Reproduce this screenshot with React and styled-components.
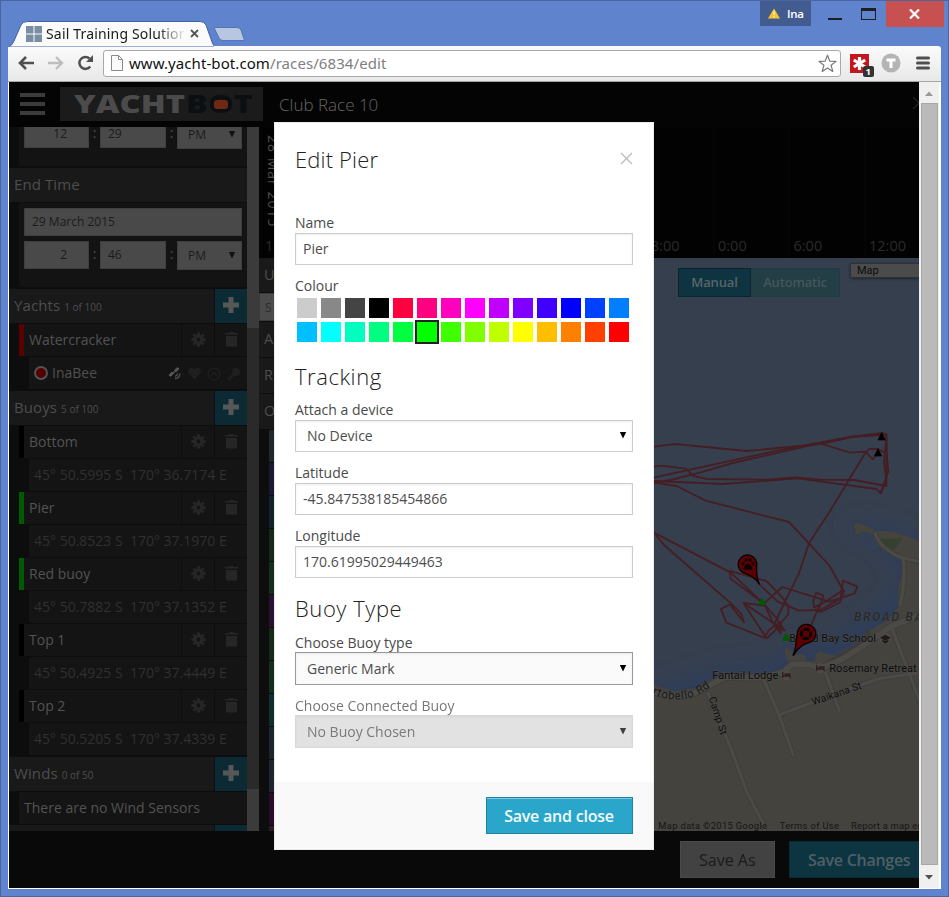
import React from "react";
import styled, { createGlobalStyle } from "styled-components";
import { FaHeart } from "react-icons/fa";

const GlobalStyle = createGlobalStyle`
  * { box-sizing: border-box; }
  html, body { margin: 0; padding: 0; overflow: hidden; }
  body { font-family: "Open Sans", "Noto Sans", sans-serif; }
  svg { display: block; flex: none; }
`;

/* ---------- browser window ---------- */

const BrowserWindow = styled.div`
  position: relative;
  width: 949px;
  height: 897px;
  background: #5f83cc;
  border: 1px solid #4a659f;
  display: flex;
  flex-direction: column;
  padding: 0 7px 7px 7px;
`;

const TitleBar = styled.div`
  height: 45px;
  flex: none;
  display: flex;
  justify-content: space-between;
`;

const TabStrip = styled.div`
  padding-top: 20px;
  display: flex;
`;

const Tab = styled.div`
  position: relative;
  width: 206px;
  height: 25px;
  display: flex;
  align-items: center;
  padding-left: 18px;
`;

const TabShape = styled.svg`
  position: absolute;
  left: 0;
  top: 0;
`;

const TabIcon = styled.svg`
  position: relative;
`;

const TabTitle = styled.span`
  position: relative;
  margin-left: 4px;
  width: 138px;
  overflow: hidden;
  white-space: nowrap;
  font: 14px/20px "Noto Sans", sans-serif;
  letter-spacing: 0.17px;
  color: #1a1a1a;
  mask-image: linear-gradient(to right, #000 112px, transparent 140px);
`;

const TabClose = styled.svg`
  position: relative;
  margin-left: 6px;
`;

const NewTab = styled.svg`
  margin: 5px 0 0 -2px;
`;

const WindowButtons = styled.div`
  display: flex;
  align-items: flex-start;
  color: #fff;
`;

const UserBadge = styled.div`
  width: 51px;
  height: 25px;
  margin-right: 15px;
  padding-left: 8px;
  background: #425c90;
  display: flex;
  align-items: center;
  gap: 7px;
  font: 600 11.5px "Open Sans", sans-serif;
  letter-spacing: -0.3px;
`;

const Minimise = styled.div`
  width: 14px;
  height: 2px;
  margin: 17px 19px 0 2px;
  background: #1d1f24;
`;

const Maximise = styled.div`
  width: 15px;
  height: 12px;
  margin: 7px 10px 0 0;
  border: 1px solid #1d1f24;
  border-top-width: 3px;
`;

const CloseWindow = styled.div`
  width: 58px;
  height: 26px;
  margin-right: -3px;
  padding-right: 2px;
  background: #c75050;
  display: flex;
  align-items: center;
  justify-content: center;
`;

const Toolbar = styled.div`
  height: 36px;
  flex: none;
  padding: 0 10px 1px 10px;
  display: flex;
  align-items: center;
  background: linear-gradient(#fbfbfb, #e8e8e8);
  border-bottom: 1px solid #a5a5a5;
  border-radius: 0 3px 0 0;
`;

const AddressBar = styled.div`
  width: 738px;
  height: 27px;
  margin-left: 9px;
  padding: 0 3px 0 7px;
  display: flex;
  align-items: center;
  background: #fff;
  border: 1px solid #a9a9a9;
  border-radius: 3px;
`;

const Url = styled.span`
  flex: 1;
  margin-left: 6px;
  font: 15px/22px "Noto Sans", sans-serif;
  color: #808080;
  letter-spacing: 0.08px;
  b { font-weight: 400; color: #111; }
`;

const NavIcon = styled.svg`
  margin-right: ${(p) => p.$gap}px;
`;

const ExtensionIcon = styled.svg`
  margin-left: ${(p) => p.$gap}px;
`;

const Viewport = styled.div`
  flex: 1;
  min-height: 0;
  display: flex;
  background: #fff;
  padding: 0 2px 1px 1px;
`;

const Page = styled.div`
  position: relative;
  width: 910px;
  height: 806px;
  flex: none;
  overflow: hidden;
  background: #090909;
  display: flex;
  flex-direction: column;
  color: #4d4d4d;
`;

const PageScroll = styled.div`
  width: 20px;
  height: 806px;
  background: #f0f0f0;
  display: flex;
  flex-direction: column;
  align-items: center;
  padding: 9px 0 8px;
`;

const PageThumb = styled.div`
  width: 17px;
  height: 763px;
  margin: 7px 0 10px;
  background: #bababa;
  border: 1px solid #a8a8a8;
`;

/* ---------- page ---------- */

const Header = styled.header`
  height: 45px;
  flex: none;
  padding: 5px 0 0 11px;
  display: flex;
  background: #040404;
`;

const Burger = styled.div`
  width: 25px;
  margin-top: 6px;
  display: flex;
  flex-direction: column;
  gap: 5px;
  i { height: 4px; background: #3c3c3c; }
`;

const Logo = styled.svg`
  margin-left: 15px;
  background: #1b1b1b;
`;

const RaceName = styled.div`
  flex: 1;
  margin-left: 16px;
  line-height: 35px;
  font-size: 17px;
  font-weight: 300;
  color: #666;
`;

const Chevron = styled.svg`
  margin-top: 9px;
`;

const Columns = styled.div`
  height: 704px;
  flex: none;
  display: flex;
`;

const Sidebar = styled.aside`
  width: 238px;
  height: 704px;
  overflow: hidden;
  background: #0d0d0d;
`;

const SideScroll = styled.div`
  width: 12px;
  background: linear-gradient(#3b3b3b 201px, #2a2a2a 201px 662px, #3b3b3b 662px);
`;

const TimeGroup = styled.div`
  height: ${(p) => p.$height}px;
  margin: 0 0 2px 10px;
  padding: ${(p) => p.$top}px 5px 0;
  overflow: hidden;
  background: #131313;
`;

const TimeRow = styled.div`
  display: flex;
  justify-content: space-between;
  margin: ${(p) => p.$lift || 0}px 0 5px;
`;

const DarkField = styled.div`
  width: ${(p) => p.$width}px;
  height: ${(p) => p.$height || 28}px;
  padding: 0 ${(p) => p.$right || 7}px 1px ${(p) => p.$left || 7}px;
  display: flex;
  align-items: center;
  justify-content: ${(p) => p.$justify || "flex-start"};
  background: #494949;
  border: 1px solid #3e3e3e;
  color: #1b1b1b;
  font-size: 12px;
`;

const Colon = styled.span`
  font-size: 14px;
  line-height: 26px;
`;

const SectionHead = styled.div`
  height: 34px;
  margin-bottom: 1px;
  display: flex;
  gap: 1px;
`;

const SectionTitle = styled.div`
  flex: 1;
  padding-left: 5px;
  background: #191919;
  font-size: 15px;
  line-height: 33px;
  letter-spacing: 0.1px;
  small { font-size: 10px; letter-spacing: 0; }
`;

const AddButton = styled.div`
  width: 32px;
  background: #0b2a34;
  display: flex;
  justify-content: center;
  padding-top: 8px;
`;

const ItemRow = styled.div`
  height: 32px;
  margin: 0 0 1px 10px;
  display: flex;
  gap: 1px;
`;

const ItemName = styled.div`
  flex: 1;
  padding-left: 5px;
  border-left: ${(p) => (p.$color ? 5 : 0)}px solid ${(p) => p.$color || "transparent"};
  background: #141414;
  color: #535353;
  font-size: 14px;
  line-height: 31px;
  white-space: nowrap;
`;

const ItemAction = styled.div`
  width: 32px;
  display: flex;
  align-items: center;
  justify-content: center;
  padding-bottom: 1px;
  background: #141414;
  color: #262626;
`;

const SubRow = styled.div`
  height: 32px;
  margin: 0 0 ${(p) => (p.$last ? 2 : 1)}px 20px;
  padding: 0 6px 2px 5px;
  display: flex;
  align-items: center;
  background: #141414;
  color: ${(p) => (p.$bright ? "#505050" : "#303030")};
  font-size: 14px;
  white-space: pre;
`;

const DeviceName = styled.span`
  flex: 1;
  margin-left: 4px;
`;

const DeviceIcons = styled.div`
  display: flex;
  align-items: center;
  gap: 6px;
  padding-top: 3px;
  color: #1f1f1f;
`;

const Record = styled.i`
  width: 14px;
  height: 14px;
  margin-top: 1px;
  border-radius: 50%;
  background: #550000;
  border: 2px solid #535353;
`;

const Main = styled.main`
  width: 660px;
  height: 704px;
  display: flex;
  flex-direction: column;
`;

const Timeline = styled.div`
  position: relative;
  height: 131px;
  flex: none;
  overflow: hidden;
  background: repeating-linear-gradient(to right, #060606 0 1px, transparent 1px 75.5px) 1.5px 0, #020202;
`;

const DateLabel = styled.span`
  position: absolute;
  left: 5px;
  top: 8px;
  writing-mode: vertical-rl;
  font-size: 14px;
  line-height: 19px;
  letter-spacing: 1px;
`;

const Hours = styled.div`
  position: absolute;
  left: 0;
  bottom: 0;
  display: flex;
  line-height: 24px;
  font-size: 14.5px;
  color: #2b2b2b;
  padding-left: 6px;
  span { width: 75.5px; flex: none; }
`;

const Split = styled.div`
  height: 573px;
  flex: none;
  display: flex;
`;

const Groups = styled.div`
  width: 395px;
  height: 573px;
  overflow: hidden;
  background: #0d0d0d;
`;

const GroupHead = styled.div`
  height: ${(p) => p.$height}px;
  margin-bottom: 1px;
  padding-left: 5px;
  line-height: ${(p) => p.$height - 1}px;
  font-size: ${(p) => (p.$field ? 12 : 14.5)}px;
  background: ${(p) => (p.$field ? "#4b4b4b" : "#191919")};
  color: ${(p) => (p.$field ? "#2b2b2b" : "#4d4d4d")};
  border: ${(p) => (p.$field ? "1px solid #3a3a3a" : "0")};
`;

const Strip = styled.div`
  height: 32px;
  margin: 0 0 1px 10px;
  background: ${(p) => p.$color};
`;

const MapArea = styled.div`
  position: relative;
  width: 265px;
  height: 573px;
  overflow: hidden;
`;

const ModeSwitch = styled.div`
  position: absolute;
  left: 24px;
  top: 10px;
  display: flex;
`;

const ModeButton = styled.div`
  width: ${(p) => p.$width}px;
  height: 29px;
  text-align: center;
  line-height: 27px;
  font-size: 13px;
  font-weight: 600;
  letter-spacing: -0.15px;
  background: ${(p) => (p.$active ? "#0d3440" : "#243e46")};
  border: 1px solid ${(p) => (p.$active ? "#09252f" : "#1f3b44")};
  border-left-width: ${(p) => (p.$active ? 1 : 0)}px;
  color: ${(p) => (p.$active ? "#59656a" : "#43565c")};
`;

const MapType = styled.div`
  position: absolute;
  left: 197px;
  top: 6px;
  width: 80px;
  height: 13px;
  padding-left: 6px;
  font: 11px/13px Roboto, sans-serif;
  background: #4b4b4b;
  color: #0b0b0b;
  box-shadow: 0 0 0 1px #2b313b, 0 1px 3px #111;
`;

const PageFooter = styled.footer`
  height: 57px;
  padding: 10px 0 0 671px;
  display: flex;
  gap: 14px;
  background: #090909;
`;

const FooterButton = styled.div`
  flex: none;
  width: ${(p) => p.$width}px;
  height: 37px;
  padding-left: 18px;
  line-height: 36px;
  font-size: 16px;
  white-space: nowrap;
  background: ${(p) => (p.$primary ? "#0d3541" : "#424242")};
  border: 1px solid ${(p) => (p.$primary ? "#0a2933" : "#4a4a4a")};
  color: ${(p) => (p.$primary ? "#4f5f65" : "#1a1a1a")};
  font-weight: ${(p) => (p.$primary ? 600 : 400)};
  letter-spacing: ${(p) => (p.$primary ? -0.27 : 0)}px;
`;

/* ---------- modal ---------- */

const Modal = styled.section`
  position: absolute;
  left: 265px;
  top: 40px;
  width: 380px;
  height: 728px;
  background: #fff;
  border: 1px solid #ececec;
  display: flex;
  flex-direction: column;
  color: #4d4d4d;
`;

const ModalBody = styled.div`
  flex: 1;
  padding: 21px 20px 0;
`;

const ModalTop = styled.div`
  display: flex;
  justify-content: space-between;
  height: 69px;
`;

const Title = styled.h2`
  margin: 0;
  height: ${(p) => p.$height || 32}px;
  font-size: 22px;
  line-height: 30px;
  font-weight: 300;
  letter-spacing: ${(p) => (p.$height ? 0.55 : 0.15)}px;
  color: #222;
`;

const CloseModal = styled.svg`
  margin-top: 8px;
`;

const Field = styled.div`
  margin-bottom: ${(p) => p.$after}px;
  opacity: ${(p) => (p.$disabled ? 0.75 : 1)};
`;

const Label = styled.label`
  display: block;
  height: 20px;
  line-height: ${(p) => (p.$low ? 22 : 20)}px;
  font-size: 14px;
  color: #4a4a4a;
`;

const Input = styled.div`
  height: ${(p) => p.$height || 32}px;
  padding: 0 5px ${(p) => (p.$height ? 0 : 1)}px ${(p) => (p.$select ? 11 : 7)}px;
  display: flex;
  align-items: center;
  justify-content: space-between;
  font-size: 14px;
  color: #4d4d4d;
  border: 1px solid ${(p) => (p.$focus ? "#999" : "#ccc")};
  background: ${(p) => (p.$disabled ? "#d9d9d9" : p.$focus ? "#fafafa" : "#fff")};
  box-shadow: inset 0 1px 2px rgba(0, 0, 0, 0.08);
`;

const Swatches = styled.div`
  display: grid;
  grid-template-columns: repeat(14, 20px);
  gap: 4px;
  padding: 2px;
`;

const Swatch = styled.i`
  height: 20px;
  background: ${(p) => p.$color};
  box-shadow: ${(p) => (p.$selected ? "0 0 0 2px #222" : "none")};
`;

const ModalFooter = styled.div`
  height: 67px;
  padding: 14px 20px 0;
  display: flex;
  justify-content: flex-end;
  background: #f9f9f9;
`;

const SaveButton = styled.div`
  width: 147px;
  height: 37px;
  margin-top: 1px;
  padding-right: 1px;
  text-align: center;
  line-height: 36px;
  font-size: 16px;
  font-weight: 600;
  letter-spacing: -0.22px;
  color: #f2fafd;
  background: #2ba6cb;
  border: 1px solid #1e82a0;
  box-shadow: inset 0 1px 0 #7ccbe2;
`;

const Arrow = ({ color = "#111" }) => (
  <svg width="8" height="7" viewBox="0 0 8 7"><path d="M.8 0h6.4L4 6.5z" fill={color} /></svg>
);

const Cross = () => (
  <svg width="16" height="16"><path d="M5.500 0h5v5.500H16v5h-5.500V16h-5v-5.500H0v-5h5.500z" fill="#575757" /></svg>
);

const Gear = () => (
  <svg width="15" height="15" viewBox="-7.500 -7.500 15 15" fill="none" stroke="currentColor">
    <circle r="3.600" strokeWidth="3.400" />
    <path d="M0-7.200V-4.500M0 7.200V4.500M-7.200 0H-4.500M7.200 0H4.500M-5.100-5.100l2 2M5.100 5.100l-2-2M5.100-5.100l-2 2M-5.100 5.100l2-2" strokeWidth="2.800" />
  </svg>
);

const Trash = () => (
  <svg width="13" height="15"><path d="M4 1l1-1h3l1 1h4v1.500H0V1zM1 4h11v10.500H1z" fill="currentColor" /></svg>
);

const Section = ({ title, count }) => (
  <SectionHead>
    <SectionTitle>{title} <small>{count}</small></SectionTitle>
    <AddButton><Cross /></AddButton>
  </SectionHead>
);

const Item = ({ name, color }) => (
  <ItemRow>
    <ItemName $color={color}>{name}</ItemName>
    <ItemAction><Gear /></ItemAction>
    <ItemAction><Trash /></ItemAction>
  </ItemRow>
);

const TimeFields = ({ hour, minute, lift }) => (
  <TimeRow $lift={lift}>
    <DarkField $width={65} $justify="flex-end" $right={21}>{hour}</DarkField>
    <Colon>:</Colon>
    <DarkField $width={66}>{minute}</DarkField>
    <Colon>:</Colon>
    <DarkField $width={65} $height={29} $justify="space-between" $left={10} $right={5}>PM<Arrow /></DarkField>
  </TimeRow>
);

const hours = ["12:00", "18:00", "0:00", "6:00", "12:00", "18:00", "0:00", "6:00", "12:00"];

const buoys = [
  ["Bottom", "#000", "45° 50.5995 S  170° 36.7174 E"],
  ["Pier", "#005a00", "45° 50.8523 S  170° 37.1970 E"],
  ["Red buoy", "#005a00", "45° 50.7882 S  170° 37.1352 E"],
  ["Top 1", "#000", "45° 50.4925 S  170° 37.4449 E"],
  ["Top 2", "#000", "45° 50.5205 S  170° 37.4339 E"],
];

const strips = ["#1d2830", "#1a1a33", "#10222b", "#142b17", "#14301c", "#2a1235", "#142b17", "#14301c", "#102e30", "#1d2630", "#1d2630", "#2b0b2b", "#2c1d26"];

const colours = [
  "#ccc", "#888", "#444", "#000", "#ff0040", "#ff0080", "#ff00bf", "#ff00ff", "#bf00ff", "#8000ff", "#4000ff", "#0000ff", "#0040ff", "#0080ff",
  "#00bfff", "#00ffff", "#00ffbf", "#00ff80", "#00ff40", "#00ff00", "#40ff00", "#80ff00", "#bfff00", "#ffff00", "#ffbf00", "#ff8000", "#ff4000", "#ff0000",
];

const tracks = [
  "0,-190 63,-198 278,-177 498,-198 598,-220 683,-231 697,-226 690,-142 697,-90 680,-50 668,-63 430,-95 205,-78 0,-87",
  "0,-97 98,-119 235,-149 400,-184 595,-221 680,-226",
  "0,-82 50,-90 140,-113 236,-141 470,-194 595,-219 697,-226 699,-160 703,-116 680,-50",
  "0,-130 22,-133 95,-124 118,-102 160,-93 340,-91 425,-98 500,-91 600,-90 697,-72",
  "498,-200 588,-172 633,-175 657,-152 675,-178",
  "683,-232 697,-226 697,-70",
  "690,-173 672,-183 645,-183 630,-165 530,0 465,100 435,190 395,270 360,345 388,360",
  "0,-82 68,-72 155,-28 405,36 465,100 527,168 567,240 515,275 480,292 478,270 487,248 508,257 495,298",
  "0,68 230,188 333,285 368,325 392,362 330,320 268,279 338,385 360,365 403,312 403,288 385,262 337,213 228,183 230,206 333,283",
  "0,68 30,105 235,284 262,312 270,337 228,283 201,297 217,338 330,383 345,360 378,337 380,370 358,340 333,287 268,279",
  "317,224 370,274 435,302 500,300 560,265 567,212 610,230 601,251 525,275 385,231 333,278",
  "560,240 570,243 558,277 500,306 483,298",
  "495,288 472,345 417,437",
];

const mainRoad = "0,546 60,560 115,552 170,525 215,500 270,503 330,503 390,485 415,463 465,463 500,474 560,450 620,412 710,350 790,318 796,314";

const MapPicture = () => (
  <svg width="265" height="573" viewBox="0 -756 795 1719">
    <defs>
      <filter id="glow" filterUnits="userSpaceOnUse" x="-200" y="-200" width="1200" height="1300"><feGaussianBlur stdDeviation="32" /></filter>
      <path id="portobello" d="M-6 552Q90 594 172 529" />
    </defs>
    <rect y="-756" width="795" height="1719" fill="#363f4d" />
    <path d="M0 540L200 480 330 470 420 420 500 400 620 350 720 270 745 170 670 90 600 50 680 50 795 95V963H0z" fill="#2d3d5a" stroke="#2d3d5a" strokeWidth="24" filter="url(#glow)" />
    <path d="M0 526L60 543 120 535 165 512 235 490 330 492 378 480 403 457 392 430 395 415 410 418 418 438 440 431 455 438 457 453 485 452 484 432 500 423 520 433 545 436 600 405 655 358 702 330 733 290 735 225 748 175 740 150 690 122 668 102 660 75 640 66 620 68 602 76 606 62 600 50 606 40 625 43 665 62 720 65 765 80 795 95V963H0z" fill="#45433e" />
    <path d="M672 85Q710 90 747 84L716 122Q685 108 672 85z" fill="#354031" />
    <g fill="none" stroke="#3c3b38" strokeLinecap="round" strokeLinejoin="round" strokeWidth="14">
      <path d="M664 70Q675 110 735 140L795 155M748 145Q755 220 738 285M163 550L172 580 225 700 280 850 325 935 335 975M330 510L375 615 418 735M375 615L560 545 680 505 796 488M515 490L556 602M712 350L796 570M500 470Q580 430 630 395 650 370 640 365" />
      <polyline points={mainRoad} strokeWidth="21" />
    </g>
    <g fill="none" stroke="#4b4a47" strokeLinecap="round" strokeLinejoin="round" strokeWidth="10">
      <path d="M664 70Q675 110 735 140L795 155M748 145Q755 220 738 285M163 550L172 580 225 700 280 850 325 935 335 975M330 510L375 615 418 735M375 615L560 545 680 505 796 488M515 490L556 602M712 350L796 570" />
      <polyline points={mainRoad} strokeWidth="17" />
    </g>
    <g fill="none" stroke="#451e24" strokeWidth="5.500" strokeLinejoin="round">
      {tracks.map((points) => <polyline key={points} points={points} />)}
    </g>
    <path d="M683-232l11 22h-22zM672-184l11 22h-22z" fill="#000" stroke="#000" strokeWidth="2" />
    <path d="M324 260l12 25h-24zM396 368l12 25h-24z" fill="#005800" />
    <g fontFamily="Roboto, sans-serif" fill="#0c0c0c" stroke="#4c4a47" strokeWidth="3" paintOrder="stroke" fontSize="33">
      <text x="600" y="333" fill="#27292b" strokeWidth="2" fontStyle="italic" fontWeight="500" textLength="230" fontSize="36">BROAD BAY</text>
      <text x="406" y="396" textLength="260">Broad Bay School</text>
      <text x="526" y="486" textLength="262">Rosemary Retreat</text>
      <text x="175" y="507" textLength="198">Fantail Lodge</text>
      <text transform="translate(478 586) rotate(-19)" textLength="155" fontSize="31">Waikana St</text>
      <text transform="translate(164 564) rotate(72)" textLength="118" fontSize="31">Camp St</text>
      <text fill="#181818" fontSize="34" strokeWidth="1"><textPath href="#portobello" textLength="186">rtobello Rd</textPath></text>
      <g fill="#151515" strokeWidth="0" fontSize="28">
        <text x="13" y="956" textLength="326">Map data ©2015 Google</text>
        <text x="377" y="956" textLength="178">Terms of Use</text>
        <text x="591" y="956" textLength="246">Report a map error</text>
      </g>
    </g>
    <g fill="#4c4946">
      <circle cx="397" cy="495" r="16" /><circle cx="499" cy="474" r="16" /><circle cx="694" cy="385" r="18" />
    </g>
    <path d="M384 486h4v8h4v-4h7v4h1v-4h10v14h-4v-4h-18v4h-4zM486 465h4v8h4v-4h7v4h1v-4h10v14h-4v-4h-18v4h-4z" fill="#30201f" />
    <path d="M678 383l16-9 16 9-16 9zM685 389v6l9 6 9-6v-6l-9 5z" fill="#201a19" />
    <g stroke="#090000" strokeWidth="4" fill="#5c0000">
      <path d="M317 224C306 203 286 195 266 187A28 28 0 1 1 308 168C308 185 306 204 317 224z" />
      <path d="M417 437C428 415 425 385 430 374A28 28 0 1 1 465 398C445 402 431 415 417 437z" />
    </g>
    <g fill="#080000">
      <path d="M282 161Q287 161 291 168 298 174 295 178 291 181 282 178 273 181 269 178 266 174 273 168 277 161 282 161z" />
      <circle cx="267" cy="161" r="4.500" /><circle cx="276" cy="150" r="5" /><circle cx="288" cy="150" r="5" /><circle cx="297" cy="161" r="4.500" />
    </g>
    <circle cx="456" cy="372" r="14" fill="none" stroke="#080000" strokeWidth="9" strokeDasharray="18 4" strokeDashoffset="9" />
  </svg>
);

const BrowserChrome = () => (
  <>
    <TitleBar>
      <TabStrip>
        <Tab>
          <TabShape width="206" height="26">
            <path d="M0 26Q4 25 6 20L13 4Q15 .5 19 .5H192Q196 .5 198 4L204 21Q205 25 208 26z" fill="#fbfbfb" stroke="#4262a6" />
          </TabShape>
          <TabIcon width="16" height="16"><path d="M0 0h7.500v7.500H0zM8.500 0H16v7.500H8.500zM0 8.500h7.500V16H0zM8.500 8.500H16V16H8.500z" fill="#7a8ea3" /></TabIcon>
          <TabTitle>Sail Training Solutions</TabTitle>
          <TabClose width="9" height="9"><path d="M1 1l7 7M8 1L1 8" stroke="#555" strokeWidth="1.800" /></TabClose>
        </Tab>
        <NewTab width="34" height="17"><path d="M2 1.500H25Q28 1.500 29 4L32.500 14.500H11Q8 14.500 7 12z" fill="#b7c7e2" stroke="#5474b4" /></NewTab>
      </TabStrip>
      <WindowButtons>
        <UserBadge>
          <svg width="12" height="11"><path d="M6 .5L12 10.500H0z" fill="#fcc42c" /><path d="M6 3.500v3.500M6 8v1.300" stroke="#fff" /></svg>
          Ina
        </UserBadge>
        <Minimise />
        <Maximise />
        <CloseWindow><svg width="11" height="10"><path d="M1 .5l9 9M10 .5l-9 9" stroke="#fff" strokeWidth="2.200" /></svg></CloseWindow>
      </WindowButtons>
    </TitleBar>
    <Toolbar>
      <NavIcon $gap={14} width="16" height="14"><path d="M8 1L2 7l6 6M2 7h14" fill="none" stroke="#505050" strokeWidth="2.600" /></NavIcon>
      <NavIcon $gap={13} width="16" height="14"><path d="M8 1l6 6-6 6M14 7H0" fill="none" stroke="#bdbdbd" strokeWidth="2.400" /></NavIcon>
      <NavIcon $gap={0} width="17" height="16"><path d="M13.200 11.500A6 6 0 1 1 12.500 3.500" fill="none" stroke="#505050" strokeWidth="2.500" /><path d="M16 0v7H9z" fill="#505050" /></NavIcon>
      <AddressBar>
        <svg width="12" height="16"><path d="M1 .5h6.500l4 4v11H.5V.5zM7.500 .5v4h4" fill="#fafafa" stroke="#8a8a8a" /></svg>
        <Url><b>www.yacht-bot.com</b>/races/6834/edit</Url>
        <svg width="19" height="19" viewBox="0 0 19 19"><path d="M9.500 1.200l2.300 5.900 6.200.3-4.900 3.900 1.700 6.100-5.300-3.500-5.300 3.500 1.700-6.100L1 7.400l6.200-.3z" fill="#fff" stroke="#777" strokeWidth="1.200" strokeLinejoin="round" /></svg>
      </AddressBar>
      <ExtensionIcon $gap={8} width="26" height="28">
        <path d="M1 5h19v19H1z" fill="#c4161c" />
        <path d="M10.500 8v13M4.800 11l11.400 7M4.800 18l11.400-7" stroke="#fff" strokeWidth="3.200" />
        <rect x="14" y="17" width="11" height="11" rx="2" fill="#333" />
        <text x="16.500" y="26" fill="#fff" fontSize="9.500" fontWeight="700" fontFamily="Open Sans, sans-serif">1</text>
      </ExtensionIcon>
      <ExtensionIcon $gap={6} width="20" height="20">
        <circle cx="10" cy="10" r="9.500" fill="#b4b4b4" />
        <path d="M5.500 5.500h9v3h-3V15h-3V8.500h-3z" fill="#fff" />
      </ExtensionIcon>
      <ExtensionIcon $gap={15} width="14" height="14"><path d="M1.500 2h11M1.500 7h11M1.500 12h11" stroke="#505050" strokeWidth="3" strokeLinecap="round" /></ExtensionIcon>
    </Toolbar>
  </>
);

const SelectField = ({ label, value, after, ...rest }) => (
  <Field $after={after} $disabled={rest.$disabled}>
    <Label $low={Boolean(rest.$height)}>{label}</Label>
    <Input $select {...rest}>{value}<Arrow color="#000" /></Input>
  </Field>
);

const EditPier = () => (
  <Modal>
    <ModalBody>
      <ModalTop>
        <Title>Edit Pier</Title>
        <CloseModal width="13" height="13"><path d="M1 1l11 11M12 1L1 12" stroke="#bbb" strokeWidth="1.300" /></CloseModal>
      </ModalTop>
      <Field $after={11}><Label>Name</Label><Input>Pier</Input></Field>
      <Field $after={17}>
        <Label>Colour</Label>
        <Swatches>{colours.map((c) => <Swatch key={c} $color={c} $selected={c === "#00ff00"} />)}</Swatches>
      </Field>
      <Title $height={39}>Tracking</Title>
      <SelectField label="Attach a device" value="No Device" after={11} />
      <Field $after={11}><Label>Latitude</Label><Input>-45.847538185454866</Input></Field>
      <Field $after={15}><Label>Longitude</Label><Input>170.61995029449463</Input></Field>
      <Title $height={39}>Buoy Type</Title>
      <SelectField label="Choose Buoy type" value="Generic Mark" after={10} $focus $height={33} />
      <SelectField label="Choose Connected Buoy" value="No Buoy Chosen" after={0} $disabled $height={33} />
    </ModalBody>
    <ModalFooter><SaveButton>Save and close</SaveButton></ModalFooter>
  </Modal>
);

export default function App() {
  return (
    <BrowserWindow>
      <GlobalStyle />
      <BrowserChrome />
      <Viewport>
        <Page>
          <Header>
            <Burger><i /><i /><i /></Burger>
            <Logo width="203" height="34">
              <g fontFamily="Open Sans, sans-serif" fontWeight="800" fontSize="24">
                <text x="14" y="26" textLength="111" lengthAdjust="spacingAndGlyphs" fill="#4b4b4b">YACHT</text>
                <text x="126" y="26" textLength="67" lengthAdjust="spacingAndGlyphs" fill="#0c0f12">BOT</text>
              </g>
              <rect x="154" y="13" width="14" height="9" rx="3" fill="#6e2813" />
            </Logo>
            <RaceName>Club Race 10</RaceName>
            <Chevron width="7" height="14"><path d="M1 1l6 6-6 6" fill="none" stroke="#222" strokeWidth="1.300" /></Chevron>
          </Header>
          <Columns>
            <Sidebar>
              <TimeGroup $height={39} $top={0}><TimeFields hour="12" minute="29" lift={-7} /></TimeGroup>
              <SectionHead><SectionTitle>End Time</SectionTitle></SectionHead>
              <TimeGroup $height={84} $top={5}>
                <TimeRow><DarkField $width={218}>29 March 2015</DarkField></TimeRow>
                <TimeFields hour="2" minute="46" />
              </TimeGroup>
              <Section title="Yachts" count="1 of 100" />
              <Item name="Watercracker" color="#5a0000" />
              <SubRow $bright $last>
                <Record />
                <DeviceName>InaBee</DeviceName>
                <DeviceIcons>
                  <svg width="14" height="14" fill="none" stroke="#555"><path d="M1 8l3-3 1.500 1.500-3 3zM6.500 3l3-2.500L11 2 8 4.500z" fill="#555" /><path d="M4.500 6.500l4-3M7 9q2 .5 2.500-2.500M7 11.500q4.500 0 5-5" strokeWidth="1.300" /></svg>
                  <FaHeart size={13} />
                  <svg width="14" height="14" fill="none" stroke="currentColor" strokeWidth="1.300"><circle cx="7" cy="7" r="5.800" /><path d="M4.500 8.500L7 6l2.500 2.500" /></svg>
                  <svg width="14" height="14"><circle cx="9" cy="5" r="4" fill="currentColor" /><path d="M7 7l-6 6" stroke="currentColor" strokeWidth="2.500" /></svg>
                </DeviceIcons>
              </SubRow>
              <Section title="Buoys" count="5 of 100" />
              {buoys.map(([name, color, place], i) => (
                <React.Fragment key={name}>
                  <Item name={name} color={color} />
                  <SubRow $last={i === buoys.length - 1}>{place}</SubRow>
                </React.Fragment>
              ))}
              <Section title="Winds" count="0 of 50" />
              <ItemRow><ItemName>There are no Wind Sensors</ItemName></ItemRow>
              <Section title="" count="" />
            </Sidebar>
            <SideScroll />
            <Main>
              <Timeline>
                <DateLabel>28 Mar 2015</DateLabel>
                <Hours>{hours.map((hour, i) => <span key={i}>{hour}</span>)}</Hours>
              </Timeline>
              <Split>
                <Groups>
                  <GroupHead $height={34}>U</GroupHead>
                  <GroupHead $height={28} $field>S</GroupHead>
                  <GroupHead $height={35}>A</GroupHead>
                  <GroupHead $height={35}>R</GroupHead>
                  <GroupHead $height={35}>O</GroupHead>
                  {strips.map((color, i) => <Strip key={i} $color={color} />)}
                </Groups>
                <MapArea>
                  <MapPicture />
                  <ModeSwitch>
                    <ModeButton $width={73} $active>Manual</ModeButton>
                    <ModeButton $width={89}>Automatic</ModeButton>
                  </ModeSwitch>
                  <MapType>Map</MapType>
                </MapArea>
              </Split>
            </Main>
          </Columns>
          <PageFooter>
            <FooterButton $width={95}>Save As</FooterButton>
            <FooterButton $width={150} $primary>Save Changes</FooterButton>
          </PageFooter>
          <EditPier />
        </Page>
        <PageScroll>
          <svg width="8" height="5"><path d="M4 .5L8 5H0z" fill="#999" /></svg>
          <PageThumb />
          <svg width="8" height="5"><path d="M4 4.500L8 0H0z" fill="#505050" /></svg>
        </PageScroll>
      </Viewport>
    </BrowserWindow>
  );
}
